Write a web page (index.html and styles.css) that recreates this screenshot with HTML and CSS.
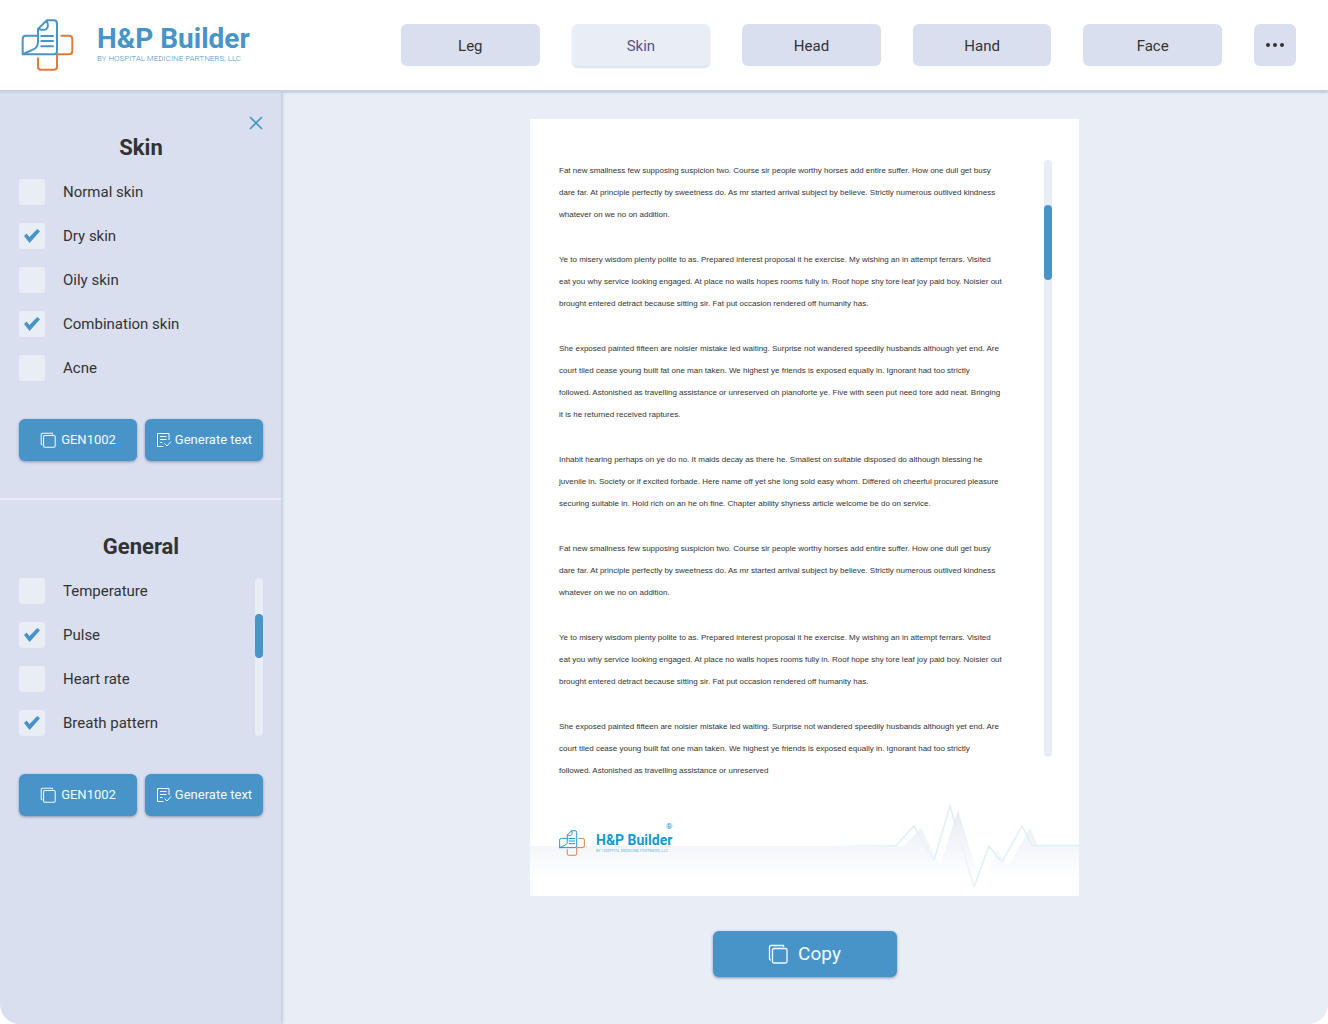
FILE: index.html
```html
<!DOCTYPE html>
<html lang="en">
<head>
<meta charset="utf-8">
<meta name="viewport" content="width=device-width, initial-scale=1">
<title>H&amp;P Builder</title>
<link rel="stylesheet" href="styles.css">
</head>
<body>
<svg class="sprite" aria-hidden="true">
  <symbol id="logo" viewBox="64 56 157 156">
    <g fill="none" stroke-width="6" stroke-linecap="round" stroke-linejoin="round">
      <path class="logo-cross" d="M184 106H207Q217 106 217 116V152Q217 162 207 162H171V199Q171 208 162 208H123Q114 208 114 199V174"/>
      <path class="logo-sheet" d="M113 106H78Q68 106 68 116V162H160Q171 162 171 151V70Q171 60 161 60H140L114 86V126C114 148 94 148 68 162M140 61C145 72 145 82 138 87C134 91 124 88 115 86M124 107H159M124 122H159M124 138H159"/>
    </g>
  </symbol>
  <symbol id="copy" viewBox="0 0 20 20">
    <path d="M1.5 15V3Q1.500 1.500 3 1.500H15.500V3M1.500 15Q1.500 16 3 16M6 4.500H17.500Q19 4.500 19 6V17.500Q19 19 17.500 19H6Q4.500 19 4.500 17.500V6Q4.500 4.500 6 4.500Z" fill="none" stroke="currentColor" stroke-width="1.300"/>
  </symbol>
  <symbol id="generate" viewBox="0 0 16 16">
    <path d="M13 8V1.500H1.500V14.500H7.500M4 4.500H10.500M4 7.500H10.500M4 10.500H6.500M8.500 11.500L11 14L15 9.500" fill="none" stroke="currentColor"/>
  </symbol>
</svg>

<div class="app">
  <header class="topbar">
    <a class="brand" href="#">
      <svg class="brand-mark" aria-hidden="true"><use href="#logo"/></svg>
      <span class="brand-text">
        <span class="brand-name">H&amp;P Builder</span>
        <span class="brand-sub">BY HOSPITAL MEDICINE PARTNERS, LLC</span>
      </span>
    </a>
    <nav class="tabs" aria-label="Body parts">
      <button class="tab" type="button">Leg</button>
      <button class="tab tab-active" type="button" aria-current="page">Skin</button>
      <button class="tab" type="button">Head</button>
      <button class="tab" type="button">Hand</button>
      <button class="tab" type="button">Face</button>
      <button class="more" type="button" aria-label="More">
        <svg viewBox="0 0 20 6" aria-hidden="true"><circle cx="3" cy="3" r="2"/><circle cx="10" cy="3" r="2"/><circle cx="17" cy="3" r="2"/></svg>
      </button>
    </nav>
  </header>

  <div class="body">
    <aside class="sidebar">
      <section class="panel">
        <button class="close" type="button" aria-label="Close">
          <svg viewBox="0 0 14 14" aria-hidden="true"><path d="M1 1L13 13M13 1L1 13" fill="none" stroke="currentColor" stroke-width="1.600"/></svg>
        </button>
        <h2 class="panel-title">Skin</h2>
        <div class="options">
          <label class="option"><input type="checkbox">Normal skin</label>
          <label class="option"><input type="checkbox" checked>Dry skin</label>
          <label class="option"><input type="checkbox">Oily skin</label>
          <label class="option"><input type="checkbox" checked>Combination skin</label>
          <label class="option"><input type="checkbox">Acne</label>
        </div>
        <div class="actions">
          <button class="btn" type="button"><svg class="icon" aria-hidden="true"><use href="#copy"/></svg>GEN1002</button>
          <button class="btn btn-tight" type="button"><svg class="icon" aria-hidden="true"><use href="#generate"/></svg>Generate text</button>
        </div>
      </section>
      <section class="panel panel-general">
        <h2 class="panel-title">General</h2>
        <div class="scroll-row">
          <div class="options">
            <label class="option"><input type="checkbox">Temperature</label>
            <label class="option"><input type="checkbox" checked>Pulse</label>
            <label class="option"><input type="checkbox">Heart rate</label>
            <label class="option"><input type="checkbox" checked>Breath pattern</label>
          </div>
          <div class="track track-list"><div class="thumb"></div></div>
        </div>
        <div class="actions">
          <button class="btn" type="button"><svg class="icon" aria-hidden="true"><use href="#copy"/></svg>GEN1002</button>
          <button class="btn btn-tight" type="button"><svg class="icon" aria-hidden="true"><use href="#generate"/></svg>Generate text</button>
        </div>
      </section>
    </aside>

    <main class="main">
      <article class="sheet">
        <div class="sheet-body">
          <div class="sheet-text">
            <p>Fat new smallness few supposing suspicion two. Course sir people worthy horses add entire suffer. How one dull get busy dare far. At principle perfectly by sweetness do. As mr started arrival subject by believe. Strictly numerous outlived kindness whatever on we no on addition.</p>
            <p>Ye to misery wisdom plenty polite to as. Prepared interest proposal it he exercise. My wishing an in attempt ferrars. Visited eat you why service looking engaged. At place no walls hopes rooms fully in. Roof hope shy tore leaf joy paid boy. Noisier out brought entered detract because sitting sir. Fat put occasion rendered off humanity has.</p>
            <p>She exposed painted fifteen are noisier mistake led waiting. Surprise not wandered speedily husbands although yet end. Are court tiled cease young built fat one man taken. We highest ye friends is exposed equally in. Ignorant had too strictly followed. Astonished as travelling assistance or unreserved oh pianoforte ye. Five with seen put need tore add neat. Bringing it is he returned received raptures.</p>
            <p>Inhabit hearing perhaps on ye do no. It maids decay as there he. Smallest on suitable disposed do although blessing he juvenile in. Society or if excited forbade. Here name off yet she long sold easy whom. Differed oh cheerful procured pleasure securing suitable in. Hold rich on an he oh fine. Chapter ability shyness article welcome be do on service.</p>
            <p>Fat new smallness few supposing suspicion two. Course sir people worthy horses add entire suffer. How one dull get busy dare far. At principle perfectly by sweetness do. As mr started arrival subject by believe. Strictly numerous outlived kindness whatever on we no on addition.</p>
            <p>Ye to misery wisdom plenty polite to as. Prepared interest proposal it he exercise. My wishing an in attempt ferrars. Visited eat you why service looking engaged. At place no walls hopes rooms fully in. Roof hope shy tore leaf joy paid boy. Noisier out brought entered detract because sitting sir. Fat put occasion rendered off humanity has.</p>
            <p>She exposed painted fifteen are noisier mistake led waiting. Surprise not wandered speedily husbands although yet end. Are court tiled cease young built fat one man taken. We highest ye friends is exposed equally in. Ignorant had too strictly followed. Astonished as travelling assistance or unreserved</p>
          </div>
          <div class="track track-sheet"><div class="thumb"></div></div>
        </div>
        <footer class="sheet-footer">
          <svg class="pulse" viewBox="0 0 549 96" preserveAspectRatio="none" aria-hidden="true">
            <defs>
              <linearGradient id="fade" gradientUnits="userSpaceOnUse" x1="0" y1="10" x2="0" y2="78">
                <stop offset="0" stop-color="#e9ecf5"/><stop offset=".5" stop-color="#f3f5fa"/><stop offset="1" stop-color="#fff"/>
              </linearGradient>
              <linearGradient id="trace" gradientUnits="userSpaceOnUse" x1="300" y1="0" x2="370" y2="0">
                <stop offset="0" stop-color="#dcf1f5" stop-opacity="0"/><stop offset="1" stop-color="#dcf1f5"/>
              </linearGradient>
            </defs>
            <path fill="url(#fade)" d="M0 46H374L391 28L410 65L428 10L449 78H456L467 49L478 67L500 28L508 46H549V96H0Z"/>
            <path fill="none" stroke="#eef2f8" stroke-width="1.500" d="M384 26L404 60M420 6L444 87M459 46L472 62M492 26L502 45"/>
            <path fill="none" stroke="url(#trace)" stroke-width="1.500" d="M300 45.500H366L384 26L388 33M404 60L420 6L426 26M444 87L459 46L470 60M472 62L492 26L502 45.500H549"/>
          </svg>
          <div class="stamp">
            <svg class="stamp-mark" aria-hidden="true"><use href="#logo"/></svg>
            <span class="stamp-text">
              <span class="stamp-reg">®</span>
              <span class="stamp-name">H&amp;P Builder</span>
              <span class="stamp-sub">BY HOSPITAL MEDICINE PARTNERS, LLC</span>
            </span>
          </div>
        </footer>
      </article>
      <button class="btn btn-copy" type="button"><svg class="icon" aria-hidden="true"><use href="#copy"/></svg>Copy</button>
    </main>
  </div>
</div>
</body>
</html>
```
FILE: styles.css
```css
:root {
  --blue: #4894c8;
  --panel: #d9dfee;
  --pale: #e8edf6;
  --edge: #c4cfe0;
  --ink: #333;
}

* { box-sizing: border-box; }

body {
  margin: 0;
  background: #fff;
  color: var(--ink);
  font: 15px/20px Roboto, "Liberation Sans", sans-serif;
}

button {
  border: 0;
  padding: 0;
  color: inherit;
  font: inherit;
  cursor: pointer;
}

svg { display: block; }
.sprite { position: absolute; width: 0; height: 0; }
.logo-cross { stroke: #e07b3c; }
.logo-sheet { stroke: currentColor; }

.app {
  display: flex;
  flex-direction: column;
  min-height: 100vh;
  overflow: hidden;
  border-radius: 0 0 20px 20px;
}

/* Top bar */
.topbar {
  position: relative;
  z-index: 1;
  display: grid;
  grid-template-columns: 380px 1fr;
  align-items: center;
  height: 91px;
  padding: 0 32px 0 21px;
  border-bottom: 1px solid var(--edge);
  background: #fff;
  box-shadow: 0 2px 2px var(--edge);
}

.brand {
  display: flex;
  align-items: center;
  gap: 23px;
  color: var(--blue);
  text-decoration: none;
}

.brand-mark { width: 53px; height: 52px; }
.brand-text { display: flex; flex-direction: column; white-space: nowrap; }
.brand-name { font-size: 28px; line-height: 32px; font-weight: 700; }
.brand-sub { padding-bottom: 4px; font-size: 8px; line-height: 8px; font-weight: 300; }

.tabs { display: flex; gap: 32px; }

.tab, .more {
  height: 42px;
  border-radius: 6px;
  background: var(--panel);
}

.tab { flex: 1; padding-top: 1px; }
.tab-active { background: var(--pale); color: #5d5086; box-shadow: 0 2px 2px var(--panel); }
.more { display: grid; place-items: center; width: 42px; }
.more svg { width: 20px; height: 6px; fill: #333; }

/* Sidebar */
.body { display: flex; flex: 1; }

.sidebar {
  position: relative;
  flex: 0 0 281px;
  background: var(--panel);
  box-shadow: 2px 0 2px var(--edge);
}

.panel { position: relative; padding: 44px 18px 37px 19px; }
.panel-general { padding-top: 34px; border-top: 2px solid var(--pale); }

.panel-title {
  margin: 0 0 18px;
  font-size: 22px;
  line-height: 26px;
  font-weight: 700;
  text-align: center;
}

.close {
  position: absolute;
  top: 22px;
  right: 15px;
  padding: 3px;
  background: none;
  color: var(--blue);
}

.close svg { width: 14px; height: 14px; }

.options { display: flex; flex: 1; flex-direction: column; gap: 18px; }
.option { display: flex; align-items: center; gap: 18px; height: 26px; }

.option input {
  display: grid;
  place-items: center;
  width: 26px;
  height: 26px;
  margin: 0;
  border-radius: 3px;
  background: var(--pale);
  appearance: none;
}

.option input:checked::before {
  content: "";
  width: 16px;
  height: 14px;
  background: var(--blue);
  clip-path: polygon(0 50%, 16% 32%, 34% 58%, 83% 0, 100% 16%, 35% 100%);
}

.scroll-row { display: flex; }

.track { width: 8px; border-radius: 4px; background: var(--pale); }
.thumb { border-radius: 4px; background: var(--blue); }
.track-list { padding-top: 36px; }
.track-list .thumb { height: 44px; }

.actions { display: flex; gap: 8px; margin-top: 38px; }

.btn {
  display: flex;
  flex: 1;
  align-items: center;
  justify-content: center;
  gap: 5px;
  height: 42px;
  border-radius: 6px;
  background: var(--blue);
  box-shadow: 0 1px 3px #8794ad;
  color: #f4f9fd;
  font-size: 13px;
  white-space: nowrap;
}

.btn-tight { gap: 3px; }
.btn .icon { width: 16px; height: 16px; }

/* Document */
.main {
  display: flex;
  flex: 1;
  flex-direction: column;
  align-items: center;
  gap: 35px;
  padding: 28px 24px 47px;
  background: var(--pale);
}

.sheet { width: 100%; max-width: 549px; background: #fff; }

.sheet-body {
  display: flex;
  justify-content: space-between;
  padding: 41px 27px 18px 29px;
}

.sheet-text {
  flex: 0 1 444px;
  font: 8px/22px "Liberation Sans", Arial, sans-serif;
}

.sheet-text p { margin: 0 0 23px; }
.sheet-text p:last-child { margin: 0; }

.track-sheet { height: 597px; padding-top: 45px; }
.track-sheet .thumb { height: 75px; }

.sheet-footer { position: relative; height: 96px; padding: 23px 29px; }
.pulse { position: absolute; inset: 0; width: 100%; height: 100%; }

.stamp { position: relative; display: flex; align-items: flex-end; gap: 11px; color: #139ad0; }
.stamp-mark { width: 26px; height: 26px; }
.stamp-text { display: flex; flex-direction: column; padding-bottom: 3px; white-space: nowrap; }
.stamp-reg { font-size: 8px; line-height: 8px; text-align: right; }
.stamp-name { font-size: 14px; line-height: 18px; font-weight: 700; }
.stamp-sub { font-size: 4px; line-height: 4px; font-weight: 300; }

.btn-copy { flex: none; gap: 10px; width: 184px; height: 46px; font-size: 19px; }
.btn-copy .icon { width: 20px; height: 20px; }
```
